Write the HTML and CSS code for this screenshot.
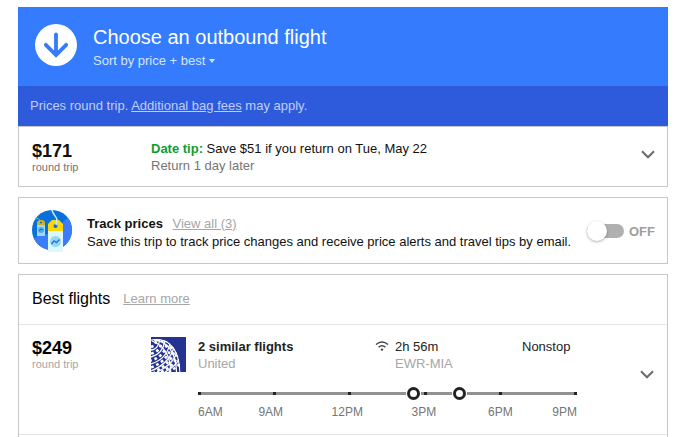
FILE: index.html
```html
<!DOCTYPE html>
<html lang="en">
<head>
    <meta charset="UTF-8">
    <meta name="viewport" content="width=device-width, initial-scale=1.0">
    <title>Choose an outbound flight</title>
    <link rel="stylesheet" href="styles.css">
</head>
<body>
    <header class="banner">
        <svg class="banner-icon" viewBox="0 0 42 42" aria-hidden="true">
            <circle cx="21" cy="21" r="21" fill="#fff"/>
            <path d="M21 10.500V31M10.800 20.800L21 31L31.200 20.800" fill="none" stroke="#347bfd" stroke-width="3.800" stroke-linecap="round"/>
        </svg>
        <div>
            <h1>Choose an outbound flight</h1>
            <button class="sort" type="button">Sort by price + best <span class="caret"></span></button>
        </div>
    </header>
    <p class="notice">Prices round trip. <a href="#">Additional bag fees</a> may apply.</p>

    <!-- Date tip -->
    <section class="card tip">
        <div class="price">
            <strong>$171</strong>
            <span class="dark">round trip</span>
        </div>
        <div class="tip-text">
            <p><b class="green">Date tip:</b> Save $51 if you return on Tue, May 22</p>
            <p class="muted">Return 1 day later</p>
        </div>
        <button class="expand" type="button" aria-label="Show date tip details">
            <svg viewBox="0 0 14 9"><path d="M1 1.300L7 7.300L13 1.300" fill="none" stroke="#6b6b6b" stroke-width="2"/></svg>
        </button>
    </section>

    <!-- Track prices -->
    <section class="card track">
        <svg class="tags" viewBox="0 0 40 42" aria-hidden="true">
            <defs>
                <clipPath id="disc"><circle cx="20" cy="20" r="20"/></clipPath>
            </defs>
            <g clip-path="url(#disc)">
                <rect width="40" height="40" fill="#0b6fd8"/>
                <path d="M40 4L31 12V40H40ZM0 31L5 26L16 24V40H0Z" fill="#3b7df8"/>
            </g>
            <path d="M3 9Q7 7 9 12" fill="none" stroke="#4db6e8" stroke-width="1"/>
            <path d="M5 15V12L7 10H11L13 12V15Z" fill="#c9b52c"/>
            <path d="M5 15H13V26H5Z" fill="#9bd9f3"/>
            <circle cx="9" cy="12.500" r="1" fill="#0b6fd8"/>
            <circle cx="9" cy="20" r="3" fill="#55a9e8"/>
            <path d="M7 21L9 19L10 20L11 19" fill="none" stroke="#1b67cf" stroke-width="1"/>
            <path d="M16 21V14L20 10H27L31 14V21Z" fill="#fdd60a"/>
            <path d="M16 21H31V40Q31 42 29 42H18Q16 42 16 40Z" fill="#dcf7fd"/>
            <circle cx="23.500" cy="16" r="2" fill="#1769d2"/>
            <path d="M20 0C21 7 27 5 24 15" fill="none" stroke="#b8effc" stroke-width="1.500"/>
            <circle cx="23.500" cy="31.500" r="5.500" fill="#94d8f5"/>
            <path d="M19.500 34L22 31L24.500 32.500L27.500 29.500" fill="none" stroke="#2872dd" stroke-width="1.400"/>
        </svg>
        <div class="track-text">
            <p><b>Track prices</b> <a class="view-all" href="#">View all (3)</a></p>
            <p>Save this trip to track price changes and receive price alerts and travel tips by email.</p>
        </div>
        <label class="switch">
            <input type="checkbox" aria-label="Track prices">
            <span>OFF</span>
        </label>
    </section>

    <!-- Best flights -->
    <section class="card best">
        <div class="best-head">
            <h2>Best flights</h2>
            <a href="#">Learn more</a>
        </div>
        <div class="flight">
            <div class="price">
                <strong>$249</strong>
                <span>round trip</span>
            </div>
            <svg class="airline" viewBox="0 0 35 35" role="img" aria-label="United">
                <defs>
                    <clipPath id="globe"><path d="M0 2.500C16 -1 29 10 29.500 35H0Z"/></clipPath>
                </defs>
                <rect width="35" height="35" fill="#243292"/>
                <g clip-path="url(#globe)" fill="none" stroke="#fff">
                    <!-- meridians, fanning out from the top left -->
                    <g stroke-width="1.300">
                        <path d="M0 3C16 0 28 10 29 35"/>
                        <path d="M3 3C16 4 25 15 25.500 35"/>
                        <path d="M1 4C13 8 20 20 19.500 35"/>
                    </g>
                    <!-- parallels, crossing from lower left to the rim -->
                    <g stroke-width="1.300">
                        <path d="M0 13Q7 13 9 2"/>
                        <path d="M0 20Q12 17 14 3"/>
                        <path d="M0 27Q16 22 19 6"/>
                        <path d="M0 34Q19 26 23 10"/>
                        <path d="M6 35Q22 28 26 15"/>
                        <path d="M14 35Q25 29 28 22"/>
                    </g>
                    <!-- filled cells between them -->
                    <g stroke-width="2.600" stroke-dasharray="2.800 2.800">
                        <path d="M0 10Q4 9 6 2"/>
                        <path d="M0 16.500Q9 15 11.500 3"/>
                        <path d="M0 23.500Q14 19.500 16.500 4" stroke-dashoffset="2"/>
                        <path d="M0 30.500Q17 24 21 8"/>
                        <path d="M3 35Q20 27 24.500 12" stroke-dashoffset="2"/>
                        <path d="M10 35Q23 29 27 18"/>
                        <path d="M18 35Q26 30 28.500 27" stroke-dashoffset="1"/>
                    </g>
                </g>
            </svg>
            <div class="details">
                <div class="facts">
                    <div class="carrier">
                        <p><b>2 similar flights</b></p>
                        <p class="light">United</p>
                    </div>
                    <svg class="wifi" viewBox="0 0 14 10" aria-hidden="true">
                        <path d="M1 3.500Q7 -1.300 13 3.500M3.600 6.200Q7 3.500 10.400 6.200" fill="none" stroke="#444" stroke-width="1.500"/>
                        <circle cx="7" cy="8.600" r="1.200" fill="#444"/>
                    </svg>
                    <div class="duration">
                        <p>2h 56m</p>
                        <p class="light">EWR-MIA</p>
                    </div>
                    <p class="stops">Nonstop</p>
                </div>
                <div class="timeline">
                    <i></i><i></i><i></i><i></i><i></i><i></i>
                    <span class="stop" style="left: 57%"></span>
                    <span class="stop" style="left: 69%"></span>
                </div>
                <div class="hours">
                    <span>6AM</span>
                    <span>9AM</span>
                    <span>12PM</span>
                    <span>3PM</span>
                    <span>6PM</span>
                    <span>9PM</span>
                </div>
            </div>
            <button class="expand" type="button" aria-label="Show flight details">
                <svg viewBox="0 0 14 9"><path d="M1 1.300L7 7.300L13 1.300" fill="none" stroke="#6b6b6b" stroke-width="2"/></svg>
            </button>
        </div>
    </section>
</body>
</html>
```
FILE: styles.css
```css
* { box-sizing: border-box; }
body { margin: 0; padding: 7px 16px 0 18px; background: #fff; color: #222; font: 13px/17px "Liberation Sans", Arial, sans-serif; }
h1, h2, p { margin: 0; }
button { border: 0; padding: 0; background: none; font: inherit; cursor: pointer; }
svg { display: block; flex: none; }

.banner { display: flex; gap: 16px; padding: 17px 17px 16px; background: #347bfd; color: #fff; }
.banner-icon { width: 42px; height: 42px; }
h1 { font-size: 20px; line-height: 27px; font-weight: normal; }
.sort { display: flex; align-items: center; gap: 4px; height: 19px; color: #d6e5ff; }
.caret { border: 3px solid transparent; border-top: 4px solid #d6e5ff; border-bottom: 0; }
.notice { padding: 11px 12px 12px; background: #2e5bdb; color: #c0cef4; }
.notice a { color: inherit; }

.card { border: 1px solid #c8c8c8; margin-bottom: 10px; }
.price { width: 119px; flex: none; padding-top: 2px; }
.price strong { display: block; font-size: 18px; line-height: 19px; }
.price span { display: block; font-size: 11px; line-height: 12px; color: #a6a6a6; }
.price .dark, .muted { color: #757575; }
.light { color: #a6a6a6; }
.green { color: #0f9d2f; }
.expand { align-self: flex-start; margin-left: auto; }
.expand svg { width: 14px; height: 9px; }

.tip { display: flex; padding: 13px 12px 12px 13px; color: #111; }
.tip .expand { margin-top: 10px; }

.track { display: flex; align-items: center; padding: 12px 12px 11px 13px; }
.tags { width: 40px; height: 42px; margin-right: 15px; }
.track-text { padding-top: 3px; line-height: 18px; color: #111; white-space: nowrap; }
.view-all { margin-left: 6px; color: #a6a6a6; }
.switch { display: flex; align-items: center; gap: 5px; margin-left: auto; color: #9e9e9e; font-weight: bold; }
.switch input { appearance: none; display: flex; align-items: center; width: 37px; height: 14px; margin: 0; border-radius: 7px; background: #b0b0b0; cursor: pointer; }
.switch input::before { content: ""; width: 20px; height: 20px; flex: none; border-radius: 50%; background: #fff; box-shadow: 0 1px 3px rgba(0, 0, 0, 0.3); }
.switch input:checked { justify-content: flex-end; background: #7baaf7; }

.best { margin: 0; border-bottom: 0; padding-bottom: 2px; }
.best-head { display: flex; align-items: center; gap: 13px; height: 50px; padding: 0 13px 2px; border-bottom: 1px solid #e5e5e5; }
.best-head a { color: #a6a6a6; }
h2 { font-size: 16px; line-height: 20px; font-weight: normal; color: #000; }
.flight { display: flex; height: 110px; padding: 12px 13px; border-bottom: 1px solid #e5e5e5; }
.flight .price strong { color: #000; }
.airline { width: 35px; height: 35px; margin-right: 12px; }
.details { flex: 1; margin-right: 63px; }
.facts { display: flex; padding: 1px 0; }
.carrier { flex: 1; }
.wifi { width: 14px; height: 10px; margin: 3px 6px 0 0; }
.duration { width: 127px; }
.stops { width: 55px; }
.timeline { position: relative; display: flex; justify-content: space-between; height: 3px; margin-top: 19px; background: #919191; }
.timeline i { width: 3px; background: #222; }
.stop { position: absolute; top: -5px; width: 13px; height: 13px; margin-left: -7px; border: 3px solid #222; border-radius: 50%; background: #fff; box-shadow: 0 0 0 1px #fff; }
.hours { display: grid; grid-template-columns: 9fr 20fr 20fr 20fr 20fr 10fr; margin-top: 9px; font-size: 12px; line-height: 16px; color: #757575; text-align: center; }
.hours span:first-child { text-align: left; }
.hours span:last-child { text-align: right; }
.flight .expand { margin-top: 33px; }
```
